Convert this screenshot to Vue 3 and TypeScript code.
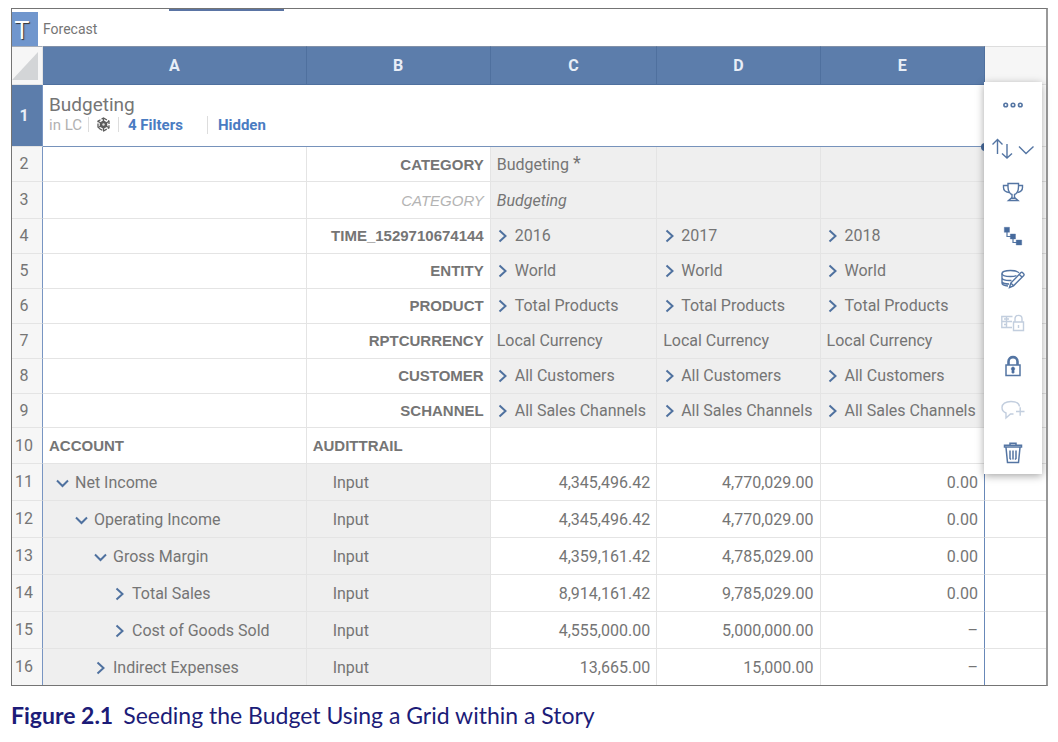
<script setup lang="ts">
interface Member {
  text: string
  expandable?: boolean
  note?: string
}

interface DimensionRow {
  n: number
  label: string
  kind?: 'first' | 'property' | 'last'
  members: Member[]
}

interface AccountRow {
  n: number
  label: string
  level: number
  open: boolean
  values: string[]
}

const columns: string[] = ['A', 'B', 'C', 'D', 'E']

const same = (text: string, expandable = true): Member[] =>
  Array.from({ length: 3 }, () => ({ text, expandable }))

const dimensions: DimensionRow[] = [
  { n: 2, label: 'CATEGORY', kind: 'first', members: [{ text: 'Budgeting', note: '*' }, { text: '' }, { text: '' }] },
  { n: 3, label: 'CATEGORY', kind: 'property', members: [{ text: 'Budgeting' }, { text: '' }, { text: '' }] },
  { n: 4, label: 'TIME_1529710674144', members: ['2016', '2017', '2018'].map((text) => ({ text, expandable: true })) },
  { n: 5, label: 'ENTITY', members: same('World') },
  { n: 6, label: 'PRODUCT', members: same('Total Products') },
  { n: 7, label: 'RPTCURRENCY', members: same('Local Currency', false) },
  { n: 8, label: 'CUSTOMER', members: same('All Customers') },
  { n: 9, label: 'SCHANNEL', kind: 'last', members: same('All Sales Channels') },
]

const accounts: AccountRow[] = [
  { n: 11, label: 'Net Income', level: 0, open: true, values: ['4,345,496.42', '4,770,029.00', '0.00'] },
  { n: 12, label: 'Operating Income', level: 1, open: true, values: ['4,345,496.42', '4,770,029.00', '0.00'] },
  { n: 13, label: 'Gross Margin', level: 2, open: true, values: ['4,359,161.42', '4,785,029.00', '0.00'] },
  { n: 14, label: 'Total Sales', level: 3, open: false, values: ['8,914,161.42', '9,785,029.00', '0.00'] },
  { n: 15, label: 'Cost of Goods Sold', level: 3, open: false, values: ['4,555,000.00', '5,000,000.00', '–'] },
  { n: 16, label: 'Indirect Expenses', level: 2, open: false, values: ['13,665.00', '15,000.00', '–'] },
]
</script>

<template>
  <figure class="figure">
    <div class="frame">
      <div class="active-tab"></div>
      <header class="bar">
        <span class="type">T</span>
        <span class="bar-text">Forecast</span>
      </header>

      <div class="sheet">
        <table class="grid">
          <colgroup>
            <col class="w-num" />
            <col class="w-a" />
            <col class="w-b" />
            <col class="w-c" />
            <col class="w-d" />
            <col class="w-e" />
            <col />
          </colgroup>
          <thead>
            <tr class="letters">
              <th class="corner">
                <svg width="26" height="28" viewBox="0 0 26 28" aria-hidden="true"><path d="M26 0V28H0Z" fill="#d3d5d7" /></svg>
              </th>
              <th v-for="c in columns" :key="c" scope="col" class="letter">{{ c }}</th>
              <th class="beyond"></th>
            </tr>
          </thead>
          <tbody>
            <tr class="title-row">
              <th scope="row" class="num selected">1</th>
              <td colspan="5" class="title-cell">
                <div class="title">Budgeting</div>
                <div class="meta">
                  <span class="unit">in LC</span>
                  <button class="cube" aria-label="Model">
                    <svg width="15" height="15" viewBox="0 0 15 15" fill="none" stroke="#5c5c5c" stroke-width="1.3">
                      <path d="M7.5 1 13 4.2V10.8L7.5 14 2 10.8V4.2Z" stroke-dasharray="4 1.2" />
                      <path d="M7.5 4 10.6 5.8V9.3L7.5 11 4.4 9.3V5.8Z" fill="#5c5c5c" />
                      <path d="M7.5 1V4M13 4.2 10.6 5.8M13 10.8 10.6 9.3M7.5 14V11M2 10.8 4.4 9.3M2 4.2 4.4 5.8" />
                      <circle cx="7.5" cy="7.5" r="1.2" fill="#ddd" stroke="none" />
                    </svg>
                  </button>
                  <a href="#filters" class="link filters">4 Filters</a>
                  <a href="#hidden" class="link hidden">Hidden</a>
                </div>
                <span class="handle"></span>
              </td>
              <td class="rest"></td>
            </tr>

            <tr v-for="d in dimensions" :key="d.n" class="dim" :class="d.kind">
              <th scope="row" class="num">{{ d.n }}</th>
              <td></td>
              <td class="dim-label">{{ d.label }}</td>
              <td v-for="(m, i) in d.members" :key="i" class="member">
                <div class="tree">
                  <button v-if="m.expandable" class="toggle narrow" :aria-label="'Expand ' + m.text">
                    <svg width="9" height="14" viewBox="0 0 9 14"><path d="M1.5 1.5 7.5 7 1.5 12.5" /></svg>
                  </button>
                  <span>{{ m.text }}</span><span v-if="m.note" class="note">{{ m.note }}</span>
                </div>
              </td>
              <td class="rest"></td>
            </tr>

            <tr class="heads">
              <th scope="row" class="num">10</th>
              <td class="head">ACCOUNT</td>
              <td class="head">AUDITTRAIL</td>
              <td></td>
              <td></td>
              <td></td>
              <td class="rest"></td>
            </tr>

            <tr v-for="a in accounts" :key="a.n" class="account">
              <th scope="row" class="num">{{ a.n }}</th>
              <td class="name">
                <div class="tree" :class="'level-' + a.level">
                  <button class="toggle" :aria-label="(a.open ? 'Collapse ' : 'Expand ') + a.label">
                    <svg v-if="a.open" width="13" height="9" viewBox="0 0 13 9"><path d="M1 1.5 6.5 7 12 1.5" /></svg>
                    <svg v-else width="9" height="14" viewBox="0 0 9 14"><path d="M1.5 1.5 7.5 7 1.5 12.5" /></svg>
                  </button>
                  <span>{{ a.label }}</span>
                </div>
              </td>
              <td class="trail">Input</td>
              <td v-for="(v, i) in a.values" :key="i" class="value">{{ v }}</td>
              <td class="rest"></td>
            </tr>
          </tbody>
        </table>

        <div class="tools" role="toolbar" aria-label="Grid tools">
          <button aria-label="More">
            <svg width="22" height="8" viewBox="0 0 22 8" stroke-width="1.6">
              <circle cx="3.7" cy="4" r="1.8" /><circle cx="11" cy="4" r="1.8" /><circle cx="18.3" cy="4" r="1.8" />
            </svg>
          </button>
          <button aria-label="Sort">
            <svg width="44" height="24" viewBox="0 0 44 24" stroke-width="1.4">
              <path d="M6.500 17V3M1.500 7.500 6.500 2.500 11.500 7.500M16 7V21M11 16.500 16 21 21 16.500" />
              <path d="M28 9.500 35 16.500 42.500 9.500" />
            </svg>
          </button>
          <button aria-label="Top N">
            <svg width="22" height="20" viewBox="0 0 22 20" stroke-width="1.4">
              <path d="M6 1.500H16.500V5C16.500 9 14.500 12 12.500 12.500V15.500L16 18.500H6.500L10 15.500V12.500C8 12 6 9 6 5Z" />
              <path d="M6 3.500H1.500V5.500C1.500 8 3.500 10 7 10.500M16.500 3.500H20.500V5.500C20.500 8 18.500 10 15.500 10.500M9 16.200H13.500" />
            </svg>
          </button>
          <button aria-label="Hierarchy">
            <svg width="20" height="20" viewBox="0 0 20 20" stroke-width="1.2">
              <path d="M4 5V10.500H9M10 11V16.500H15" />
              <path class="solid" d="M1.300 1.300H6.500V6.300H1.300ZM7.300 8H12.500V13H7.300ZM13.200 14H18.700V19H13.200Z" stroke-width=".4" />
            </svg>
          </button>
          <button aria-label="Data entry">
            <svg width="24" height="20" viewBox="0 0 24 20" stroke-width="1.4">
              <path d="M18 4C17 2.400 13.500 1.500 9.500 1.500 4.500 1.500 1 2.800 1 4.500S4.500 7.500 9.500 7.500C12 7.500 14 7.200 15.500 6.600" />
              <path d="M1 4.500V14C1 15.500 3.500 16.700 7 17M1 9C1.500 10.500 5 11.800 10.500 11.500M1 13C2 14.300 5 15 8 15" />
              <path d="M8.500 18.500 9.800 14 20 3.600C21 2.600 24 5.200 22.800 6.400L12.500 16.800ZM9.800 14 12.500 16.800M18.200 5.400 21 8" />
            </svg>
          </button>
          <button aria-label="Lock cells" disabled>
            <svg width="24" height="18" viewBox="0 0 24 18" stroke-width="1.4">
              <path d="M11.500 2.500H.8V13.500H11M.8 7.500H11M5.500 2.500V13.500M3 5H8M3 10.500H5" />
              <path d="M12.500 8H22.500V16.500H12.500ZM14 8V4.800C14 .2 21 .2 21 4.800V8M17.500 11V14" />
            </svg>
          </button>
          <button aria-label="Lock">
            <svg width="18" height="22" viewBox="0 0 18 22" stroke-width="1.5">
              <path d="M2 10H16V20.500H2Z" />
              <path d="M4.500 10V6.500C4.500 .6 13.500 .6 13.500 6.500V10" stroke-width="2.600" />
              <path class="solid" d="M9 12A1.800 1.800 0 0 1 10 15.200V18H8V15.200A1.800 1.800 0 0 1 9 12Z" stroke-width=".8" />
            </svg>
          </button>
          <button aria-label="Add comment" disabled>
            <svg width="24" height="20" viewBox="0 0 24 20" stroke-width="1.4">
              <path d="M18.500 6.500C18 3 15 1.500 10 1.500 4.500 1.500 1 4 1 7.500 1 10 2.500 12 5 13V18L9.500 14H12.500" />
              <path d="M15 11.500H23.500M19.200 7.200V15.800" />
            </svg>
          </button>
          <button aria-label="Delete">
            <svg width="20" height="22" viewBox="0 0 20 22" stroke-width="1.5">
              <path d="M1.500 5V3.200H18.500V5ZM7 3V1.300H13V3M3 5.500 4.500 20.500H15.500L17 5.500M7 8.500V16.500L8 17.500M10 8.500V17.500M13 8.500V16.500L12 17.500" />
            </svg>
          </button>
        </div>
      </div>
    </div>
    <figcaption class="caption"><b>Figure 2.1</b><span>Seeding the Budget Using a Grid within a Story</span></figcaption>
  </figure>
</template>

<style>
body {
  margin: 0;
  background: #fff;
}
</style>

<style scoped>
.figure {
  margin: 0;
  padding: 8px 10px 0 11px;
  font-family: Roboto, "Liberation Sans", sans-serif;
  font-size: 16px;
  line-height: 20px;
  color: #757575;
}
.frame {
  border: 1px solid #747474;
  border-right: 2px solid #999;
}
button {
  border: 0;
  padding: 0;
  background: none;
  font: inherit;
  color: inherit;
}
svg {
  display: block;
}
.active-tab {
  width: 115px;
  height: 2px;
  margin-left: 157px;
  background: #5a74a4;
}
.bar {
  display: flex;
  align-items: center;
  height: 35px;
  gap: 5px;
  font-size: 14px;
}
.type {
  width: 26px;
  height: 34px;
  box-sizing: border-box;
  padding-right: 6px;
  background: #7096cd;
  color: #fff;
  font: 26px/34px "Open Sans", sans-serif;
  text-align: center;
  text-shadow: 1px 1px 1px #333;
}
.sheet {
  position: relative;
}
.grid {
  width: 100%;
  table-layout: fixed;
  border-collapse: separate;
  border-spacing: 0;
}
.w-num { width: 31px; }
.w-a { width: 25.5%; }
.w-b { width: 17.8%; }
.w-c { width: 16.1%; }
.w-d { width: 15.8%; }
.w-e { width: 15.9%; }
th,
td {
  box-sizing: border-box;
  padding: 0 6px;
  border-right: 1px solid #e4e4e4;
  border-bottom: 1px solid #e4e4e4;
  white-space: nowrap;
}
tr > :last-child {
  border-right: 0;
}
.letters {
  height: 39px;
}
.letters th {
  border-top: 1px solid #a6adb8;
}
.letter {
  background: #5c7dab;
  border-color: #4f709e;
  color: #e8eef7;
  font-weight: 700;
}
.letters .letter {
  border-top-color: #8190a8;
}
.letters .corner {
  background: #f6f6f6;
  padding: 0;
}
.letters .beyond {
  background: #f6f6f6;
  border-top-color: #ddd;
}
.num {
  padding: 0 6px 0 0;
  background: #f6f6f6;
  border-right: 1px solid #7895c2;
  font-weight: 400;
  text-align: center;
}
.num.selected {
  background: #5c7dab;
  color: #e8eef7;
  font-weight: 700;
}
.title-row {
  height: 62px;
}
.title-cell {
  position: relative;
  padding-bottom: 4px;
  border-right: 0;
  border-bottom: 1px solid #7692bb;
}
.title {
  font-size: 19px;
  line-height: 22px;
}
.meta {
  display: flex;
  align-items: center;
  font-size: 15px;
  line-height: 18px;
}
.unit {
  padding-right: 6px;
  color: #b2b2b2;
}
.cube {
  padding: 0 7px;
  border: solid #ddd;
  border-width: 0 1px;
}
.link {
  color: #4a7cc2;
  font-weight: 700;
  text-decoration: none;
}
.filters {
  padding: 0 24px 0 9px;
}
.hidden {
  padding-left: 10px;
  border-left: 1px solid #ddd;
}
.handle {
  position: absolute;
  right: -4px;
  bottom: -5px;
  width: 8px;
  height: 8px;
  border-radius: 50%;
  background: #466a9c;
}
.dim {
  height: 35px;
}
.first td,
.property td,
.account td {
  padding-top: 2px;
}
.heads {
  height: 36px;
}
.property {
  height: 37px;
}
.last {
  height: 34px;
}
.dim-label,
.head {
  font-family: "Liberation Sans", Arial, sans-serif;
  font-size: 15px;
  font-weight: 700;
}
.dim-label {
  text-align: right;
}
.property .dim-label {
  color: #b4b4b4;
  font-weight: 400;
}
.property td {
  font-style: italic;
}
.member,
.name,
.trail {
  background: #efefef;
}
.tree {
  display: flex;
  align-items: center;
}
.toggle {
  display: flex;
  justify-content: center;
  width: 13px;
  margin-right: 6px;
}
.toggle svg {
  fill: none;
  stroke: #4f719f;
  stroke-width: 2;
}
.narrow {
  width: 12px;
}
.note {
  margin: -4px 0 0 4px;
  font-size: 18px;
}
.account {
  height: 37px;
}
.account:last-child {
  height: 36px;
}
.account:last-child > * {
  border-bottom: 0;
}
.level-0 { padding-left: 7px; }
.level-1 { padding-left: 26px; }
.level-2 { padding-left: 45px; }
.level-3 { padding-left: 64px; }
.trail {
  padding-left: 26px;
}
.value {
  text-align: right;
}
.dim > :nth-child(6),
.heads > :nth-child(6),
.account > :nth-child(6) {
  border-right-color: #6888b8;
}
.tools {
  position: absolute;
  top: 36px;
  right: 4px;
  display: flex;
  flex-direction: column;
  align-items: center;
  justify-content: space-between;
  box-sizing: border-box;
  width: 58px;
  height: 392px;
  padding: 11px 0 9px;
  background: #fff;
  box-shadow: 0 2px 8px rgba(0, 0, 0, 0.35);
}
.tools button {
  display: flex;
  align-items: center;
  justify-content: center;
  width: 100%;
  height: 24px;
}
.tools svg {
  fill: none;
  stroke: #5475a3;
}
.tools .solid {
  fill: #466a9c;
}
.tools button:disabled {
  opacity: 0.35;
}
.caption {
  display: flex;
  gap: 10px;
  padding-top: 15px;
  color: #1c1c78;
  font: 23px/28px Lato, "Noto Sans", sans-serif;
}
</style>
